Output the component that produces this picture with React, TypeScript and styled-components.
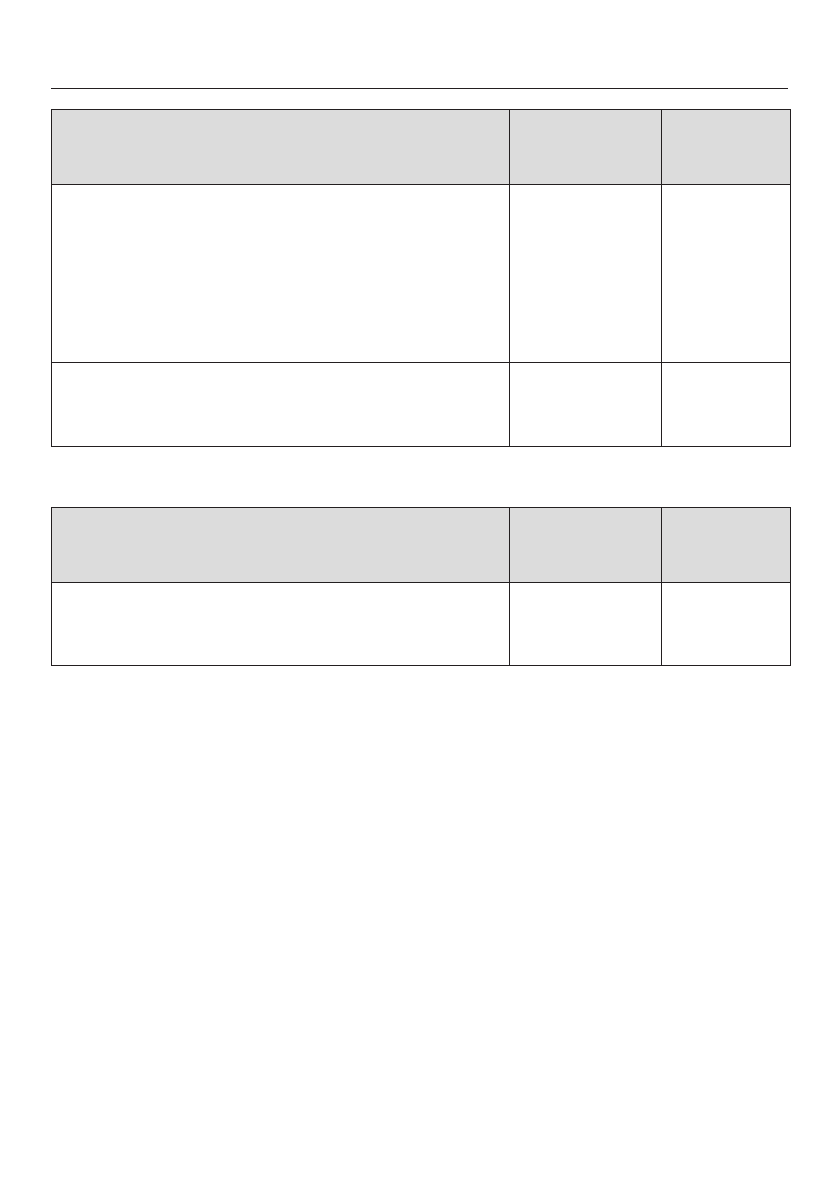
import styled, { createGlobalStyle } from "styled-components";

const GlobalStyle = createGlobalStyle`
  html, body {
    margin: 0;
    padding: 0;
    background: #ffffff;
    font-family: "Liberation Sans", Arial, sans-serif;
  }
`;

type Row = { header?: boolean; height: number };

const table1: Row[] = [
  { header: true, height: 75 },
  { height: 178 },
  { height: 84 },
];

const table2: Row[] = [
  { header: true, height: 75 },
  { height: 83 },
];

const COLUMNS = 3;

export default function App() {
  return (
    <Page>
      <GlobalStyle />
      <Rule />
      <Table>
        {table1.map((row, i) =>
          Array.from({ length: COLUMNS }).map((_, c) => (
            <Cell key={`${i}-${c}`} $header={row.header} $height={row.height} />
          ))
        )}
      </Table>
      <Table $gap={60}>
        {table2.map((row, i) =>
          Array.from({ length: COLUMNS }).map((_, c) => (
            <Cell key={`${i}-${c}`} $header={row.header} $height={row.height} />
          ))
        )}
      </Table>
    </Page>
  );
}

const Page = styled.div`
  padding: 88px 0 0 51px;
  min-height: 1191px;
  box-sizing: border-box;
`;

const Rule = styled.div`
  width: 737px;
  height: 1px;
  background: #231f20;
`;

const Table = styled.div<{ $gap?: number }>`
  display: grid;
  grid-template-columns: 458px 152px 129px;
  width: 740px;
  margin-top: ${(p) => p.$gap ?? 20}px;
  border-top: 1px solid #231f20;
  border-left: 1px solid #231f20;
  box-sizing: border-box;
`;

const Cell = styled.div<{ $header?: boolean; $height: number }>`
  height: ${(p) => p.$height}px;
  background: ${(p) => (p.$header ? "#dcdcdc" : "#ffffff")};
  border-right: 1px solid #231f20;
  border-bottom: 1px solid #231f20;
  box-sizing: border-box;
`;
